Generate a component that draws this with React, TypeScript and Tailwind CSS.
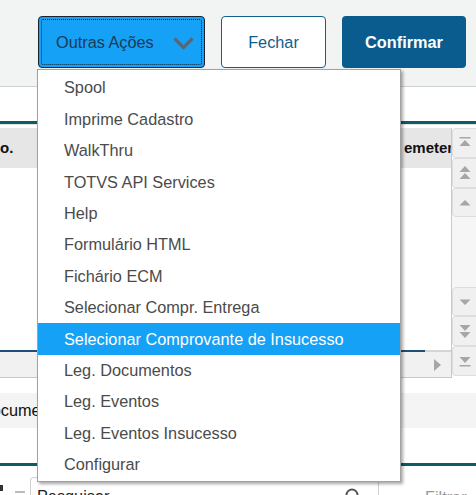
import React from "react";

const items = [
  "Spool",
  "Imprime Cadastro",
  "WalkThru",
  "TOTVS API Services",
  "Help",
  "Formulário HTML",
  "Fichário ECM",
  "Selecionar Compr. Entrega",
  "Selecionar Comprovante de Insucesso",
  "Leg. Documentos",
  "Leg. Eventos",
  "Leg. Eventos Insucesso",
  "Configurar",
];

function ScrollBtn({ kind, h }: { kind: string; h: string }) {
  const c = "#a6a6a6";
  return (
    <div
      className={`${h} bg-[#f0f0f0] border-t border-l border-b border-[#dedede] rounded-l-[4px] flex items-center justify-center`}
    >
      <svg width="12" height="16" viewBox="0 0 12 16">
        {kind === "first" && (
          <>
            <rect x="0.5" y="2" width="11" height="1.5" fill={c} />
            <polygon points="6,5 11.5,11 0.5,11" fill={c} />
          </>
        )}
        {kind === "dup" && (
          <>
            <polygon points="6,1 11.5,7 0.5,7" fill={c} />
            <polygon points="6,8 11.5,14 0.5,14" fill={c} />
          </>
        )}
        {kind === "up" && <polygon points="6,5 11.5,10.5 0.5,10.5" fill={c} />}
        {kind === "down" && <polygon points="0.5,5.5 11.5,5.5 6,11" fill={c} />}
        {kind === "ddown" && (
          <>
            <polygon points="0.5,2 11.5,2 6,8" fill={c} />
            <polygon points="0.5,9 11.5,9 6,15" fill={c} />
          </>
        )}
        {kind === "last" && (
          <>
            <polygon points="0.5,4 11.5,4 6,10" fill={c} />
            <rect x="0.5" y="12" width="11" height="1.5" fill={c} />
          </>
        )}
      </svg>
    </div>
  );
}

export default function App() {
  return (
    <div className="relative w-[476px] h-[495px] overflow-hidden bg-white font-['Liberation_Sans',Arial,sans-serif]">
      {/* toolbar */}
      <div className="h-[87px] bg-[#f2f3f3] border-b border-[#cfd0d0] flex items-start gap-[16px] pl-[38px] pt-[16px]">
        <button className="relative w-[167px] h-[52px] rounded-[4px] bg-[#15a1f6] border border-[#1b2230] flex items-center pl-[17px] text-[#1c3a56] text-[16.3px]">
          <span className="absolute inset-[2px] border border-dotted border-[#1b2230] rounded-[2px]" />
          Outras Ações
          <svg
            className="absolute right-[10px] top-[20px]"
            width="21"
            height="13"
            viewBox="0 0 21 13"
          >
            <polyline
              points="1.5,1.5 10.5,10.5 19.5,1.5"
              fill="none"
              stroke="#566878"
              strokeWidth="3.2"
            />
          </svg>
        </button>
        <button className="w-[105px] h-[52px] rounded-[4px] bg-white border border-[#10608f] text-[#0f5e8d] text-[16.3px] flex items-center justify-center">
          Fechar
        </button>
        <button className="w-[124px] h-[52px] rounded-[4px] bg-[#0b5c8e] text-white font-bold text-[16.3px] flex items-center justify-center">
          Confirmar
        </button>
      </div>

      {/* area above table */}
      <div className="h-[37px] border-b-[3px] border-[#0a5c6b]" />
      <div className="h-[4px] border-t border-[#e4e4e4]" />

      {/* table */}
      <div className="flex h-[250px]">
        <div className="w-[452px] flex flex-col border-r border-[#c9c9c9]">
          <div className="h-[40px] bg-[#e6e6e6] flex items-center text-[15px] font-bold text-[#111]">
            <div className="w-[404px]">o.</div>
            <div className="flex-1 overflow-hidden whitespace-nowrap">emetente</div>
          </div>
          <div className="flex-1 bg-white" />
          <div className="h-[2px] flex">
            <div className="w-[425px] bg-[#1f4f7b]" />
            <div className="flex-1 bg-[#d4d4d4]" />
          </div>
          <div className="h-[26px] bg-[#f1f1f1] border-b border-[#c9c9c9] flex items-center justify-end pr-[10px]">
            <svg width="7" height="12" viewBox="0 0 7 12">
              <polygon points="0,0 7,6 0,12" fill="#a6a6a6" />
            </svg>
          </div>
        </div>
        <div className="flex-1 flex flex-col">
          <ScrollBtn kind="first" h="h-[30px]" />
          <ScrollBtn kind="dup" h="h-[30px]" />
          <ScrollBtn kind="up" h="h-[29px]" />
          <div className="h-[70px] bg-[#f6f6f6]" />
          <ScrollBtn kind="down" h="h-[29px]" />
          <ScrollBtn kind="ddown" h="h-[30px]" />
          <ScrollBtn kind="last" h="h-[30px]" />
        </div>
      </div>

      {/* below table */}
      <div className="h-[15px]" />
      <div className="h-[35px] bg-[#f4f4f4] flex items-center overflow-hidden">
        <span className="ml-[-20px] text-[16.3px] text-[#111] whitespace-nowrap">
          Documentos
        </span>
      </div>
      <div className="h-[38px] border-b-[3px] border-[#0a5c6b]" />
      <div className="h-[11px]" />
      <div className="flex h-[30px]">
        <div className="w-[30px] relative">
          <div className="absolute left-0 top-[8px] w-[3px] h-[6px] bg-[#333]" />
          <div className="absolute left-[15px] top-[14px] w-[10px] h-[2px] bg-[#bbb]" />
        </div>
        <div className="w-[348px] border-l border-t border-[#cfcfcf] rounded-tl-[4px] flex items-start pt-[6px] pl-[6px] relative">
          <span className="text-[16.3px] text-[#222]">Pesquisar</span>
          <svg
            className="absolute left-[314px] top-[10px]"
            width="16"
            height="16"
            viewBox="0 0 16 16"
          >
            <circle cx="7" cy="7" r="5.5" fill="none" stroke="#555" strokeWidth="2" />
          </svg>
        </div>
        <div className="flex-1 border-l border-[#d0d0d0] pl-[46px] pt-[8px] text-[16.3px] text-[#999]">
          Filtrar
        </div>
      </div>

      {/* dropdown menu */}
      <div className="absolute left-[37px] top-[69px] w-[364px] bg-white border border-[#a2a2a2] shadow-[2px_2px_3px_rgba(0,0,0,0.35)] pt-[2px] pb-[1px]">
        {items.map((t) => {
          const active = t === "Selecionar Comprovante de Insucesso";
          return (
            <div
              key={t}
              className={`h-[31.4px] flex items-center pl-[26px] text-[16.3px] whitespace-nowrap ${
                active ? "bg-[#15a1f6] text-white" : "text-[#4b4b4b]"
              }`}
            >
              {t}
            </div>
          );
        })}
      </div>
    </div>
  );
}
